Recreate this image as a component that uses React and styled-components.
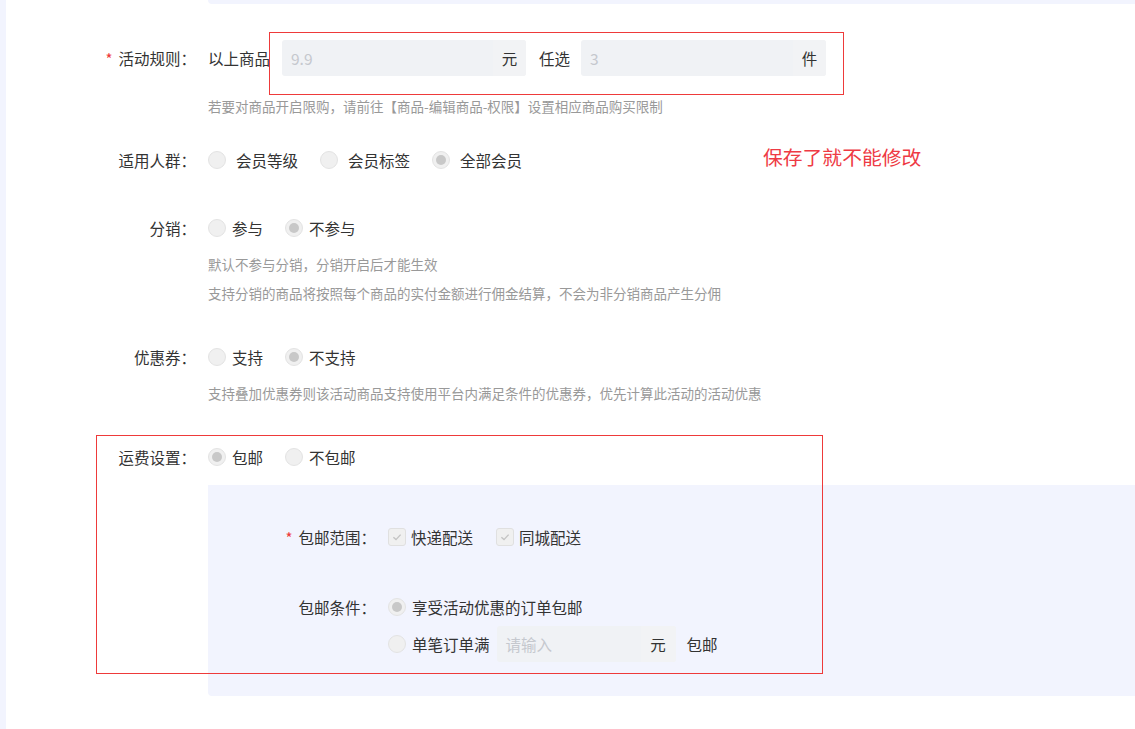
import React from 'react';
import styled, { createGlobalStyle } from 'styled-components';

const GlobalStyle = createGlobalStyle`
  body {
    margin: 0;
    background: #fff;
    font-family: "Noto Sans CJK SC", "Noto Sans", sans-serif;
    color: #333;
  }
`;

const lavender = '#f2f4fe';

const Page = styled.div`
  display: flex;
  width: 1135px;
  height: 729px;
  overflow: hidden;
`;

const Strip = styled.div`
  width: 6px;
  flex-shrink: 0;
  background: ${lavender};
`;

const Main = styled.div`
  flex: 1;
  position: relative;
  font-size: 15.5px;
`;

const Row = styled.div`
  display: flex;
  align-items: flex-start;
  margin-top: ${p => p.$mt || 0}px;
`;

const Label = styled.div`
  width: ${p => p.$w || 190}px;
  margin-right: 12px;
  flex-shrink: 0;
  text-align: right;
  line-height: 36px;
  white-space: nowrap;
  color: #333;
`;

const Star = styled.span`
  color: #ee3a3a;
  margin-right: 6px;
  font-size: 15px;
`;

const Content = styled.div`
  flex: 1;
  min-width: 0;
`;

const Line = styled.div`
  display: flex;
  align-items: center;
  height: 36px;
  margin-top: ${p => p.$mt || 0}px;
  white-space: nowrap;
`;

const TopPanel = styled.div`
  height: 4px;
  background: ${lavender};
  border-radius: 0 0 0 4px;
`;

const Hint = styled.div`
  font-size: 13.5px;
  line-height: 20px;
  color: #999;
  margin-top: ${p => p.$mt || 0}px;
  white-space: nowrap;
`;

const Text = styled.span`
  margin-right: ${p => p.$mr || 0}px;
`;

const InputBox = styled.div`
  display: flex;
  width: ${p => p.$w}px;
  height: 36px;
  border-radius: 3px;
  overflow: hidden;
  background: #f0f2f5;
  margin-right: ${p => p.$mr || 0}px;
`;

const InputField = styled.div`
  flex: 1;
  padding-left: 9px;
  line-height: 36px;
  color: #c5c8ce;
  font-size: 15.5px;
`;

const Suffix = styled.div`
  width: ${p => p.$w || 33}px;
  text-align: center;
  line-height: 36px;
  background: #f2f3f5;
  color: #333;
`;

const RadioItem = styled.label`
  display: inline-flex;
  align-items: center;
  margin-right: ${p => p.$mr ?? 22}px;
`;

const RadioDot = styled.span`
  position: relative;
  width: 18px;
  height: 18px;
  box-sizing: border-box;
  border-radius: 50%;
  border: 1px solid #e3e3e3;
  background: #f0f0f0;
  margin-right: ${p => p.$gap}px;
  flex-shrink: 0;

  &::after {
    content: '';
    display: ${p => (p.$checked ? 'block' : 'none')};
    position: absolute;
    inset: 3px;
    border-radius: 50%;
    background: #c8c8c8;
  }
`;

const CheckItem = styled.label`
  display: inline-flex;
  align-items: center;
  margin-right: 23px;
`;

const CheckBox = styled.span`
  display: inline-flex;
  align-items: center;
  justify-content: center;
  width: 18px;
  height: 18px;
  box-sizing: border-box;
  border-radius: 3px;
  border: 1px solid #e0e0e0;
  background: #f0f0f0;
  margin-right: 5px;
`;

const Panel = styled.div`
  margin-top: 10px;
  background: ${lavender};
  border-radius: 0 0 0 4px;
  padding: 34px 0 34px;
`;

const Note = styled.div`
  position: absolute;
  left: 757px;
  top: 145px;
  font-size: 19.8px;
  line-height: 24px;
  color: #ee3a44;
`;

const Mark = styled.div`
  position: absolute;
  left: ${p => p.$x}px;
  top: ${p => p.$y}px;
  width: ${p => p.$w}px;
  height: ${p => p.$h}px;
  box-sizing: border-box;
  border: 1px solid #ee3a3a;
  pointer-events: none;
`;

const Radio = ({ checked, gap = 6, mr, children }) => (
  <RadioItem $mr={mr}>
    <RadioDot $checked={checked} $gap={gap} />
    {children}
  </RadioItem>
);

const Check = ({ children }) => (
  <CheckItem>
    <CheckBox>
      <svg width="12" height="12" viewBox="0 0 12 12">
        <path d="M2.4 6.2 L5 8.6 L9.6 3.6" fill="none" stroke="#c4c4c4" strokeWidth="1.4" />
      </svg>
    </CheckBox>
    {children}
  </CheckItem>
);

export default function App() {
  return (
    <>
      <GlobalStyle />
      <Page>
        <Strip />
        <Main>
          <Row>
            <Label />
            <Content>
              <TopPanel />
            </Content>
          </Row>

          <Row $mt={36}>
            <Label><Star>*</Star>活动规则：</Label>
            <Content>
              <Line>
                <Text $mr={12}>以上商品</Text>
                <InputBox $w={244} $mr={13}>
                  <InputField>9.9</InputField>
                  <Suffix>元</Suffix>
                </InputBox>
                <Text $mr={11}>任选</Text>
                <InputBox $w={245}>
                  <InputField>3</InputField>
                  <Suffix>件</Suffix>
                </InputBox>
              </Line>
              <Hint $mt={20}>若要对商品开启限购，请前往【商品-编辑商品-权限】设置相应商品购买限制</Hint>
            </Content>
          </Row>

          <Row $mt={26}>
            <Label>适用人群：</Label>
            <Content>
              <Line>
                <Radio gap={10}>会员等级</Radio>
                <Radio gap={10}>会员标签</Radio>
                <Radio gap={10} checked>全部会员</Radio>
              </Line>
            </Content>
          </Row>

          <Row $mt={32}>
            <Label>分销：</Label>
            <Content>
              <Line>
                <Radio>参与</Radio>
                <Radio checked>不参与</Radio>
              </Line>
              <Hint $mt={8}>默认不参与分销，分销开启后才能生效</Hint>
              <Hint $mt={9}>支持分销的商品将按照每个商品的实付金额进行佣金结算，不会为非分销商品产生分佣</Hint>
            </Content>
          </Row>

          <Row $mt={36}>
            <Label>优惠券：</Label>
            <Content>
              <Line>
                <Radio>支持</Radio>
                <Radio checked>不支持</Radio>
              </Line>
              <Hint $mt={8}>支持叠加优惠券则该活动商品支持使用平台内满足条件的优惠券，优先计算此活动的活动优惠</Hint>
            </Content>
          </Row>

          <Row $mt={36}>
            <Label>运费设置：</Label>
            <Content>
              <Line>
                <Radio checked>包邮</Radio>
                <Radio>不包邮</Radio>
              </Line>
              <Panel>
                <Row>
                  <Label $w={168}><Star>*</Star>包邮范围：</Label>
                  <Content>
                    <Line>
                      <Check>快递配送</Check>
                      <Check>同城配送</Check>
                    </Line>
                  </Content>
                </Row>
                <Row $mt={33}>
                  <Label $w={168}>包邮条件：</Label>
                  <Content>
                    <Line>
                      <Radio checked>享受活动优惠的订单包邮</Radio>
                    </Line>
                    <Line $mt={1}>
                      <Radio mr={7}>单笔订单满</Radio>
                      <InputBox $w={179} $mr={11}>
                        <InputField>请输入</InputField>
                        <Suffix $w={35}>元</Suffix>
                      </InputBox>
                      <Text>包邮</Text>
                    </Line>
                  </Content>
                </Row>
              </Panel>
            </Content>
          </Row>

          <Note>保存了就不能修改</Note>
          <Mark $x={263} $y={32} $w={575} $h={63} />
          <Mark $x={90} $y={435} $w={727} $h={239} />
        </Main>
      </Page>
    </>
  );
}
